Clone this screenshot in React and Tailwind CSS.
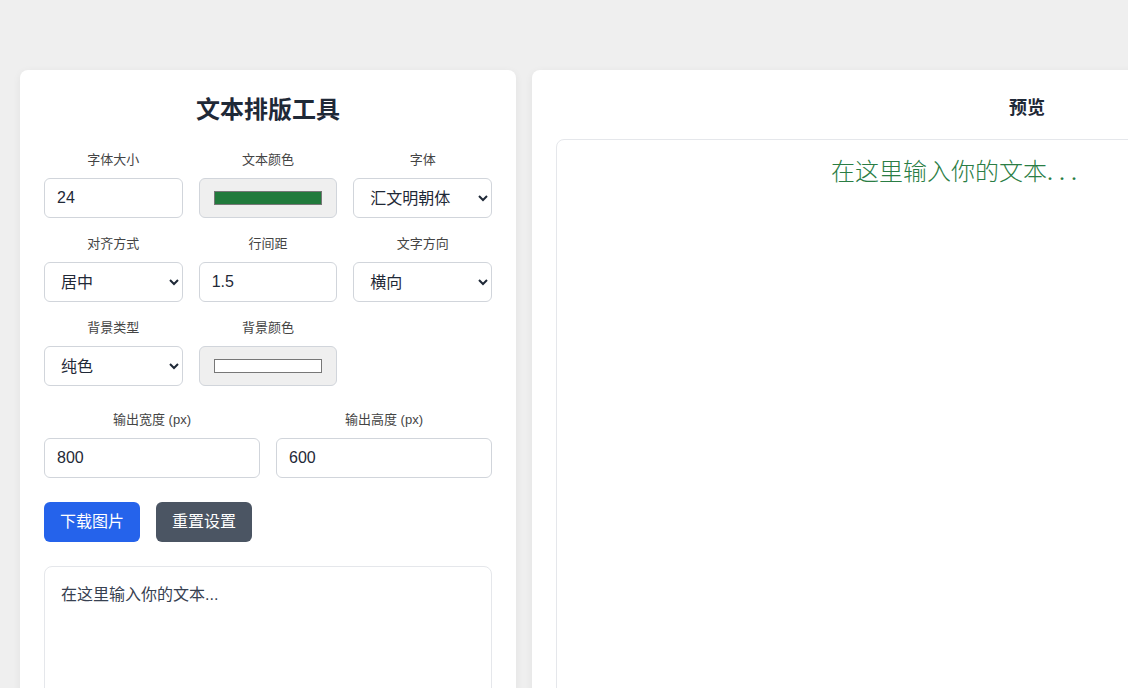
import React from "react";

const font = { fontFamily: '"Liberation Sans", "Noto Sans CJK SC", sans-serif' };

function Label({ children }) {
  return (
    <label className="block text-center text-[13px] leading-5 text-[#444444] mb-2">{children}</label>
  );
}

function TextInput({ value }) {
  return (
    <input
      type="text"
      defaultValue={value}
      className="block w-full h-10 px-3 rounded-md border border-[#d1d5db] bg-white text-base text-[#1f2937] outline-none"
    />
  );
}

function Select({ value, options }) {
  return (
    <select
      defaultValue={value}
      className="block w-full h-10 px-3 rounded-md border border-[#d1d5db] bg-white text-base text-[#1f2937] outline-none"
    >
      {options.map((o) => (
        <option key={o}>{o}</option>
      ))}
    </select>
  );
}

function ColorBox({ color }) {
  return (
    <div className="h-10 w-full rounded-md border border-[#d1d5db] bg-[#efefef] flex items-center justify-center px-[14px]">
      <div className="w-full h-[14px] border border-[#777777]" style={{ backgroundColor: color }} />
    </div>
  );
}

export default function App() {
  return (
    <div className="w-[1128px] h-[688px] overflow-hidden bg-[#efefef]" style={font}>
      <div className="flex gap-4 pt-[70px] pl-5">
        <div className="w-[496px] shrink-0 bg-white rounded-lg shadow-[0_2px_8px_rgba(0,0,0,0.06)] p-6 h-[700px]">
          <h1 className="text-2xl leading-8 font-bold text-center text-[#1f2937] mb-6">文本排版工具</h1>
          <div className="grid grid-cols-3 gap-x-4 gap-y-4">
            <div>
              <Label>字体大小</Label>
              <TextInput value="24" />
            </div>
            <div>
              <Label>文本颜色</Label>
              <ColorBox color="#217a3c" />
            </div>
            <div>
              <Label>字体</Label>
              <Select value="汇文明朝体" options={["汇文明朝体", "宋体", "黑体"]} />
            </div>
            <div>
              <Label>对齐方式</Label>
              <Select value="居中" options={["左对齐", "居中", "右对齐"]} />
            </div>
            <div>
              <Label>行间距</Label>
              <TextInput value="1.5" />
            </div>
            <div>
              <Label>文字方向</Label>
              <Select value="横向" options={["横向", "纵向"]} />
            </div>
            <div>
              <Label>背景类型</Label>
              <Select value="纯色" options={["纯色", "渐变", "图片"]} />
            </div>
            <div>
              <Label>背景颜色</Label>
              <ColorBox color="#ffffff" />
            </div>
          </div>
          <div className="grid grid-cols-2 gap-4 mt-6">
            <div>
              <Label>输出宽度 (px)</Label>
              <TextInput value="800" />
            </div>
            <div>
              <Label>输出高度 (px)</Label>
              <TextInput value="600" />
            </div>
          </div>
          <div className="flex gap-4 mt-6">
            <button className="h-10 px-4 rounded-md bg-[#2563eb] text-white text-base">下载图片</button>
            <button className="h-10 px-4 rounded-md bg-[#4b5563] text-white text-base">重置设置</button>
          </div>
          <textarea
            className="block w-full mt-6 h-[200px] rounded-lg border border-[#e5e7eb] p-4 text-base leading-6 text-[#374151] resize-none outline-none"
            defaultValue="在这里输入你的文本..."
          />
        </div>
        <div className="w-[990px] shrink-0 bg-white rounded-lg shadow-[0_2px_8px_rgba(0,0,0,0.06)] p-6 h-[700px]">
          <h2 className="text-lg leading-7 font-bold text-center text-[#1f2937] mb-[17px]">预览</h2>
          <div className="border border-[#e5e7eb] rounded-lg h-[600px]">
            <div
              className="w-[800px] pt-[14px] text-center text-2xl leading-9 text-[#2a7d44]"
              style={{ fontFamily: '"Liberation Serif", "Noto Sans CJK SC", serif', fontWeight: 300 }}
            >
              在这里输入你的文本<span className="tracking-[6px]">...</span>
            </div>
          </div>
        </div>
      </div>
    </div>
  );
}
